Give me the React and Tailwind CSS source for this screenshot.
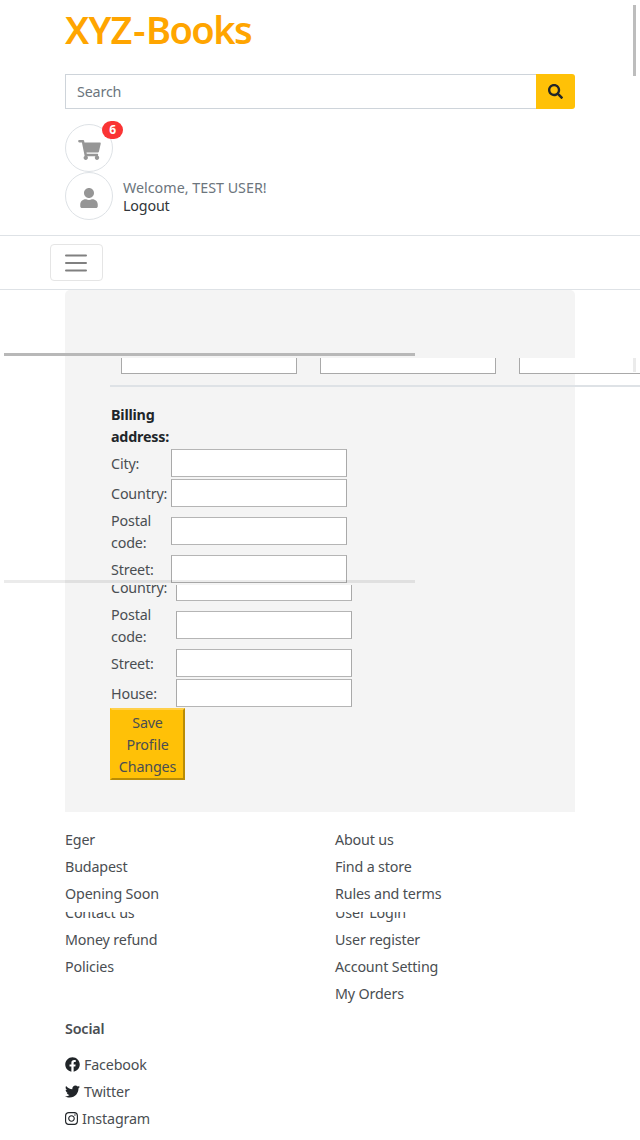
import React from "react";
import { FaShoppingCart, FaUser, FaSearch, FaFacebook, FaTwitter, FaInstagram, FaYoutube } from "react-icons/fa";

function Field({ label, tall, wide }) {
  return (
    <div className={tall ? "flex h-[46px] items-center" : "flex h-[30px] items-center"}>
      <label className={wide ? "w-[65px] shrink-0 pt-0.5" : "w-[60px] shrink-0 pt-px"}>{label}</label>
      <input className="h-7 w-44 shrink-0 border border-[#a9a9a9] border-y-[#b5b5b5] bg-white" />
    </div>
  );
}

function Links({ items }) {
  return (
    <ul className="w-[270px] shrink-0">
      {items.map((t) => (
        <li key={t} className="h-[27px] leading-[27px]">{t}</li>
      ))}
    </ul>
  );
}

function Social({ icon, name }) {
  return (
    <li className="flex h-[27px] items-center gap-1">
      <span className="text-[#212529]">{icon}</span>
      <span>{name}</span>
    </li>
  );
}

export default function App() {
  return (
    <div className="relative h-[1140px] w-[640px] overflow-hidden bg-white font-['Noto_Sans',sans-serif] text-[14.3px] leading-[22px] tracking-[-0.16px] text-[#4a4e52]">
      <header className="h-[236px] border-b border-[#dee2e6] px-[65px]">
        <h1 className="h-[74px] pt-[5px] text-[38px] leading-[48px] font-semibold tracking-[-0.8px] text-[#ffa500]">XYZ<span className="mx-[1.5px]">-</span><span className="tracking-[-1.6px]">Books</span></h1>
        <form className="flex h-[35px]">
          <div className="flex grow items-center border border-r-0 border-[#ced4da] pl-[11px] text-[#6c757d]">Search</div>
          <button type="button" className="flex w-[39px] items-center justify-center rounded-r-[3px] bg-[#ffc107] text-[15px] text-[#212529]"><FaSearch /></button>
        </form>
        <div className="relative mt-[15px] flex size-12 items-center justify-center rounded-full border border-[#dee2e6] pt-[3px] text-[#969696]">
          <FaShoppingCart className="h-5 w-[23px]" />
          <span className="absolute -top-1 left-9 flex h-[18px] w-[21px] items-center justify-center rounded-full bg-[#fa3434] text-xs font-bold text-white">6</span>
        </div>
        <div className="flex items-center gap-[10px]">
          <div className="flex size-12 items-center justify-center rounded-full border border-[#dee2e6] pt-[3px] text-[20px] text-[#969696]"><FaUser /></div>
          <div className="pt-0.5 leading-[18px]">
            <div className="tracking-[0px] text-[#6c757d]">Welcome, TEST USER!</div>
            <div className="text-[#32363a]">Logout</div>
          </div>
        </div>
      </header>

      <nav className="h-[54px] border-b border-[#dee2e6] pl-[50px] pt-2">
        <button type="button" className="flex h-[37px] w-[53px] items-center justify-center rounded-[4px] border border-[#e5e5e5] pr-0.5">
          <svg width="24" height="20" viewBox="0 0 24 20" stroke="#808080" strokeWidth="2" strokeLinecap="round"><path d="M2 2.5h20M2 10h20M2 17.5h20" /></svg>
        </button>
      </nav>

      <div className="mx-[65px] h-[68px] rounded-t-[5px] bg-[#f4f4f4]" />

      <section className="flex h-[227px] overflow-hidden">
        <div className="ml-[65px] h-full w-[510px] shrink-0 bg-[#f4f4f4]">
          <div className="ml-[45px] w-[600px]">
            <div className="flex h-[29px] gap-[23px] border-b-2 border-[#dee2e6] pl-[11px]">
              <div className="h-4 w-44 border border-t-0 border-[#a9a9a9] bg-white" />
              <div className="h-4 w-44 border border-t-0 border-[#a9a9a9] bg-white" />
              <div className="h-4 w-44 border border-t-0 border-[#a9a9a9] bg-white" />
            </div>
          </div>
          <div className="ml-[46px] w-[300px] pt-[17px]">
            <h2 className="h-[44px] w-[60px] font-bold tracking-[-0.2px] text-[#212529]">Billing<br />address:</h2>
            <Field label="City:" />
            <Field label="Country:" />
            <Field label={<>Postal<br />code:</>} tall />
            <Field label="Street:" />
          </div>
        </div>
      </section>

      <section className="mx-[65px] h-[227px] overflow-hidden bg-[#f4f4f4] pl-[46px]">
        <div className="-mt-[13px]">
          <Field label="Country:" wide />
          <Field label={<>Postal<br />code:</>} tall wide />
          <Field label="Street:" wide />
          <Field label="House:" wide />
          <button type="button" className="-ml-px flex h-[72px] w-[75px] items-center justify-center border-2 border-t-[#ffd04a] border-l-[#ffc107] border-r-[#b98c05] border-b-[#b98c05] bg-[#ffc107] pt-0.5">
            <span>Save<br />Profile<br />Changes</span>
          </button>
        </div>
      </section>

      <footer>
        <div className="h-[100px] overflow-hidden px-[65px]">
          <div className="-mt-[19px] flex h-[33px] font-semibold">
            <h3 className="w-[270px]">Shops</h3>
            <h3>Company</h3>
          </div>
          <div className="flex">
            <Links items={["Eger", "Budapest", "Opening Soon"]} />
            <Links items={["About us", "Find a store", "Rules and terms"]} />
          </div>
        </div>
        <div className="h-[228px] overflow-hidden px-[65px]">
          <div className="-mt-[13px] flex">
            <Links items={["Contact us", "Money refund", "Policies"]} />
            <Links items={["User Login", "User register", "Account Setting", "My Orders"]} />
          </div>
          <h3 className="mt-[11px] h-[33px] font-semibold">Social</h3>
          <ul>
            <Social icon={<FaFacebook size={15} />} name="Facebook" />
            <Social icon={<FaTwitter size={15} />} name="Twitter" />
            <Social icon={<FaInstagram className="h-[15px] w-[13px]" />} name="Instagram" />
            <Social icon={<FaYoutube className="mb-px ml-px h-[17px] w-[15px]" />} name="" />
          </ul>
        </div>
      </footer>

      <div className="absolute left-[633px] top-[5px] h-[71px] w-[3px] bg-[#bdbdbd]" />
      <div className="absolute left-[4px] top-[353px] h-[3px] w-[411px] bg-[#b8b8b8]" />
      <div className="absolute left-[633px] top-[358px] h-[14px] w-[3px] bg-[#ebebeb]" />
      <div className="absolute left-[4px] top-[580px] h-[3px] w-[411px] bg-black/8" />
    </div>
  );
}
